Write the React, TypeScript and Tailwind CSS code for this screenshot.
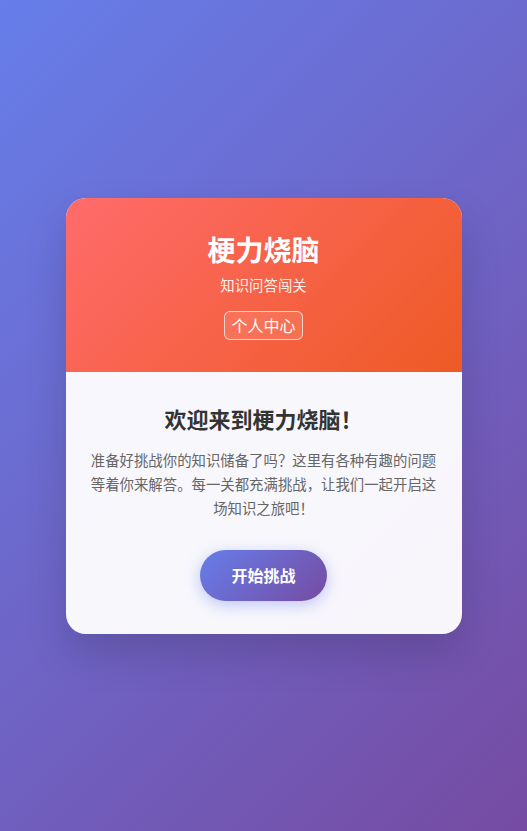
import React from "react";

export default function App() {
  return (
    <div
      className="min-h-screen w-full flex items-center justify-center bg-[linear-gradient(135deg,#667eea_0%,#764ba2_100%)]"
      style={{ fontFamily: '"Noto Sans CJK SC", "Noto Sans", sans-serif' }}
    >
      <div className="w-[396px] rounded-[20px] overflow-hidden bg-white/95 shadow-[0_20px_40px_rgba(0,0,0,0.15)]">
        <div className="flex flex-col items-center pt-[30px] pb-8 text-white bg-[linear-gradient(135deg,#ff6b6b_0%,#ee5a24_100%)]">
          <h1 className="text-[28px] font-bold leading-[42px]">梗力烧脑</h1>
          <p className="mt-[4px] text-[14.4px] leading-[22px] opacity-90">知识问答闯关</p>
          <button className="mt-[15px] px-[6px] py-[4px] text-[16px] leading-[19px] rounded-[6px] border border-white/70 bg-white/10 text-white">
            个人中心
          </button>
        </div>
        <div className="flex flex-col items-center px-6 pt-[30px] pb-[33px] text-center">
          <h2 className="text-[22px] font-bold leading-[33px] text-[#333333]">欢迎来到梗力烧脑！</h2>
          <p className="mt-[13px] text-[14.4px] leading-[24px] text-[#666666]">
            准备好挑战你的知识储备了吗？这里有各种有趣的问题等着你来解答。每一关都充满挑战，让我们一起开启这场知识之旅吧！
          </p>
          <button className="mt-[30px] px-[31px] py-[15px] text-[16px] leading-[21px] font-bold text-white rounded-full bg-[linear-gradient(135deg,#667eea_0%,#764ba2_100%)] shadow-[0_4px_15px_rgba(102,126,234,0.4)]">
            开始挑战
          </button>
        </div>
      </div>
    </div>
  );
}
